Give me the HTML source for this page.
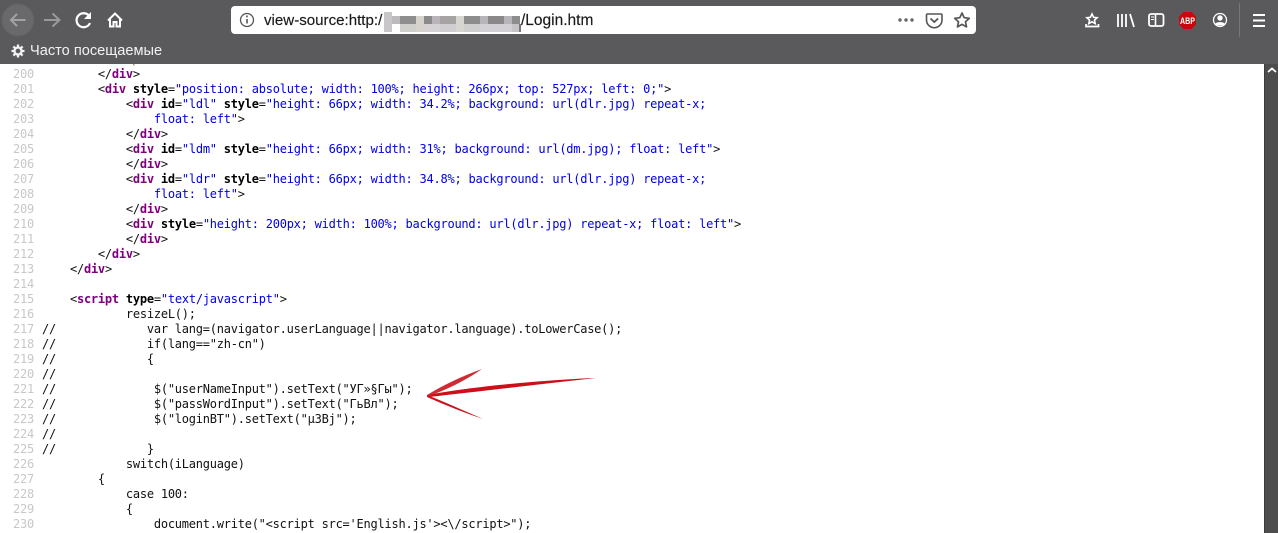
<!DOCTYPE html>
<html><head><meta charset="utf-8">
<style>
html,body{margin:0;padding:0;width:1278px;height:533px;overflow:hidden;background:#fff}
#chrome{position:absolute;left:0;top:0;width:1278px;height:64px;background:#5a5a5d}
#url{position:absolute;left:231px;top:6px;width:745px;height:28px;background:#fff;border-radius:4px}
.u{position:absolute;font:15.1px/29px "Liberation Sans",sans-serif;color:#1a1a1a;top:6px;white-space:pre;-webkit-text-stroke:.15px #1a1a1a}
#bm{position:absolute;left:30px;top:42px;font:14.6px/18px "Liberation Sans","DejaVu Sans",sans-serif;color:#f2f2f2;white-space:pre}
svg{position:absolute;left:0;top:0}
#sb{position:absolute;left:1264px;top:64px;width:14px;height:469px;background:#4d4d4d;border-left:1px solid #3c3c3c;box-sizing:border-box}
#code{position:absolute;left:0;top:66px;width:1264px;height:467px;overflow:hidden}
.l{position:absolute;left:42px;font:12px/15px "DejaVu Sans Mono",monospace;letter-spacing:-.235px;color:#111;white-space:pre;height:15px}
.n{position:absolute;width:34px;left:0;text-align:right;font:12px/15px "DejaVu Sans Mono",monospace;letter-spacing:-.235px;color:#c8c8c8}
i{font-style:normal;font-weight:bold;color:#800080}b{color:#000}u{text-decoration:none;color:#0000e6}
</style></head><body>
<div id="chrome"></div>
<div id="url"></div>
<div class="u" style="left:264px">view-source:http:/</div>
<div class="u" style="left:521px;font-size:15.5px">/Login.htm</div>
<svg width="1278" height="64" style="z-index:2">
<circle cx="18" cy="20" r="16" fill="#69696c" stroke="#626265"/>
<path d="M25.500 20H11M17 14l-6 6 6 6" fill="none" stroke="#a2a2a4" stroke-width="2"/>
<path d="M59 20H44M52.500 13.500l7 6.500-7 6.500" fill="none" stroke="#99999b" stroke-width="2"/>
<path d="M89.500 16.500A7 7 0 1 0 90 23" fill="none" stroke="#fff" stroke-width="2.200"/><path d="M91 12v7h-7z" fill="#fff"/>
<path d="M108 20.500l7-7 7 7M110 19v7.500h3.500V22h3v4.500h3.500V19" fill="none" stroke="#fff" stroke-width="2"/>
<g fill="none" stroke="#f2f2f2"><circle cx="18" cy="51" r="3.500" stroke-width="2.300"/><path d="M18 44.500v3M18 54.500v3M11.500 51h3M21.500 51h3M13.400 46.400l2 2M20.600 53.600l2 2M13.400 55.600l2-2M20.600 48.400l2-2" stroke-width="2.300"/></g>
<g fill="none" stroke="#555"><circle cx="247" cy="20" r="6.500" stroke-width="1.300"/><path d="M247 19v4.500" stroke-width="1.600"/><path d="M247 15.500v1.800" stroke-width="1.600"/></g>
<g fill="#666"><circle cx="900" cy="20" r="1.700"/><circle cx="906" cy="20" r="1.700"/><circle cx="912" cy="20" r="1.700"/></g>
<path d="M927.500 14h13.500a1 1 0 0 1 1 1v5a7.500 7.500 0 0 1-15.500 0v-5a1 1 0 0 1 1-1z" fill="none" stroke="#555" stroke-width="1.600"/><path d="M930.500 18.500l3.800 3.500 3.800-3.500" fill="none" stroke="#555" stroke-width="1.800"/>
<path d="M962 13l2.200 4.700 5.100.6-3.800 3.500 1 5.100-4.500-2.500-4.500 2.500 1-5.100-3.800-3.500 5.100-.6z" fill="none" stroke="#555" stroke-width="1.700" stroke-linejoin="round"/>
<path d="M1092 14l1.600 3.300 3.500.4-2.600 2.400.7 3.500-3.200-1.800-3.200 1.800.7-3.500-2.600-2.400 3.500-.4z" fill="none" stroke="#fff" stroke-width="1.600"/><path d="M1086 24v2.500h12.500V24" fill="none" stroke="#fff" stroke-width="1.700"/>
<path d="M1118 14v13M1122 14v13M1126 14v13M1130 14l4 13" fill="none" stroke="#fff" stroke-width="1.800"/>
<rect x="1149" y="14" width="14.500" height="12" rx="2" fill="none" stroke="#fff" stroke-width="1.800"/><path d="M1155.500 14v12" stroke="#fff" stroke-width="1.600"/><path d="M1151 17h3M1151 19.500h3" stroke="#fff" stroke-width="1"/>
<path d="M1183.500 12h8l4.500 4.500v8l-4.500 4.500h-8l-4.500-4.500v-8z" fill="#c8070f"/>
<text x="1187.500" y="24" text-anchor="middle" font-family="Liberation Sans,sans-serif" font-size="9.500" font-weight="700" fill="#fff" textLength="15" lengthAdjust="spacingAndGlyphs">ABP</text>
<circle cx="1220" cy="20" r="6.500" fill="none" stroke="#fff" stroke-width="1.300"/><circle cx="1220" cy="18" r="2.700" fill="#fff"/><path d="M1215 24c1-2.500 9-2.500 10 0-2 2-8 2-10 0z" fill="#fff"/>
<path d="M1239.500 3v34" stroke="#767678"/>
<path d="M1253 15h12M1253 20.500h12M1253 26h12" stroke="#fff" stroke-width="2"/>
<g shape-rendering="crispEdges">
<rect x="384" y="12" width="8" height="20" fill="#c9c6c9"/><rect x="392" y="16" width="8" height="8" fill="#bdbabd"/>
<rect x="400" y="16" width="16" height="8" fill="#8e8e8e"/><rect x="400" y="24" width="16" height="8" fill="#cfcfcc"/>
<rect x="416" y="16" width="8" height="16" fill="#d6d2cc"/><rect x="424" y="16" width="8" height="8" fill="#8a8a8a"/><rect x="424" y="24" width="16" height="8" fill="#d4d2d2"/>
<rect x="432" y="16" width="8" height="8" fill="#b9b4ba"/><rect x="440" y="16" width="16" height="8" fill="#a5a3a3"/><rect x="440" y="24" width="16" height="8" fill="#d0ced0"/>
<rect x="456" y="16" width="8" height="16" fill="#d8d6d0"/><rect x="464" y="16" width="16" height="8" fill="#8d8d8d"/><rect x="464" y="24" width="16" height="8" fill="#cfcfcf"/>
<rect x="480" y="16" width="8" height="8" fill="#b8b5ba"/><rect x="488" y="16" width="16" height="8" fill="#898989"/><rect x="480" y="24" width="32" height="8" fill="#d2d0d4"/>
<rect x="504" y="16" width="8" height="8" fill="#b7b5b9"/><rect x="512" y="16" width="8" height="8" fill="#8d8d8d"/><rect x="512" y="24" width="8" height="8" fill="#c6c4c6"/><rect x="519" y="24" width="2" height="8" fill="#777"/>
</g>
</svg>
<div id="bm">Часто посещаемые</div>
<div id="code"></div>
<div id="sb"><svg width="13" height="12" style="left:0;top:0"><path d="M3 8l4-3.500L11 8" fill="none" stroke="#fff" stroke-width="1.800"/></svg></div>
<svg width="1278" height="533" style="z-index:3;pointer-events:none">
<path d="M133 64h1.500v1.500H133z" fill="#a89a60"/>
<path d="M427 395C470 387 540 380 596 378C540 384 475 392 428 397z" fill="#cc0f18"/>
<path d="M427 395C445 384 465 375 482 369C466 380 447 390 428 396z" fill="#cf2b33"/>
<path d="M427 395C447 403 467 412 483 419C465 413 445 405 427 397z" fill="#c9141d"/>
</svg>
<script>
var T=[
[200,'        &lt;/<i>div</i>&gt;'],
[201,'        &lt;<i>div</i> <b>style</b>=<u>"position: absolute; width: 100%; height: 266px; top: 527px; left: 0;"</u>&gt;'],
[202,'            &lt;<i>div</i> <b>id</b>=<u>"ldl"</u> <b>style</b>=<u>"height: 66px; width: 34.2%; background: url(dlr.jpg) repeat-x;</u>'],
[203,'                <u>float: left"</u>&gt;'],
[204,'            &lt;/<i>div</i>&gt;'],
[205,'            &lt;<i>div</i> <b>id</b>=<u>"ldm"</u> <b>style</b>=<u>"height: 66px; width: 31%; background: url(dm.jpg); float: left"</u>&gt;'],
[206,'            &lt;/<i>div</i>&gt;'],
[207,'            &lt;<i>div</i> <b>id</b>=<u>"ldr"</u> <b>style</b>=<u>"height: 66px; width: 34.8%; background: url(dlr.jpg) repeat-x;</u>'],
[208,'                <u>float: left"</u>&gt;'],
[209,'            &lt;/<i>div</i>&gt;'],
[210,'            &lt;<i>div</i> <b>style</b>=<u>"height: 200px; width: 100%; background: url(dlr.jpg) repeat-x; float: left"</u>&gt;'],
[211,'            &lt;/<i>div</i>&gt;'],
[212,'        &lt;/<i>div</i>&gt;'],
[213,'    &lt;/<i>div</i>&gt;'],
[214,''],
[215,'    &lt;<i>script</i> <b>type</b>=<u>"text/javascript"</u>&gt;'],
[216,'            resizeL();'],
[217,'//             var lang=(navigator.userLanguage||navigator.language).toLowerCase();'],
[218,'//             if(lang=="zh-cn")'],
[219,'//             {'],
[220,'//'],
[221,'//              $("userNameInput").setText("УГ»§Гы");'],
[222,'//              $("passWordInput").setText("ГьВл");'],
[223,'//              $("loginBT").setText("µЗВj");'],
[224,'//'],
[225,'//             }'],
[226,'            switch(iLanguage)'],
[227,'        {'],
[228,'            case 100:'],
[229,'            {'],
[230,'                document.write("&lt;script src=\'English.js\'&gt;&lt;\\/script&gt;");']
];
var h='';
T.forEach(function(r,k){var y=k*15+1;h+='<div class="n" style="top:'+y+'px">'+r[0]+'</div><div class="l" style="top:'+y+'px">'+r[1]+'</div>';});
document.getElementById('code').innerHTML=h;
</script>
</body></html>
